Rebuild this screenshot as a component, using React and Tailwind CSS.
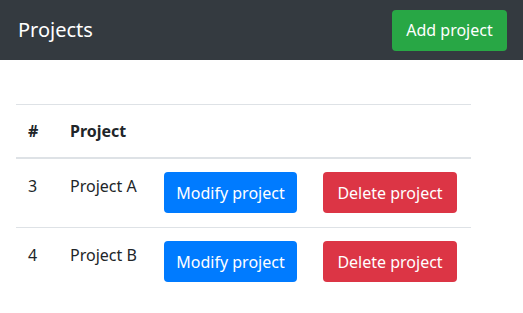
export default function App() {
  const rows = [
    { id: 3, name: "Project A" },
    { id: 4, name: "Project B" },
  ];
  return (
    <div className="min-h-[313px] bg-white text-[#212529]" style={{ fontFamily: '"Noto Sans", "Open Sans", sans-serif' }}>
      <div className="flex h-[60px] items-center justify-between bg-[#343a40] pl-[18px] pr-[16px]">
        <span className="text-[20px] leading-[30px] text-white">Projects</span>
        <button className="h-[41px] w-[115px] rounded-[4px] bg-[#28a745] text-[16px] text-white">Add project</button>
      </div>
      <div className="pl-[16px] pt-[44px]">
        <table className="w-[455px] border-collapse text-[16px] leading-[24px]">
          <thead>
            <tr className="border-t border-b-2 border-[#dee2e6]">
              <th className="w-[42px] py-[14px] pl-[12px] text-left font-bold">#</th>
              <th className="w-[94px] py-[14px] pl-[12px] text-left font-bold">Project</th>
              <th className="w-[159px]"></th>
              <th></th>
            </tr>
          </thead>
          <tbody>
            {rows.map((r, i) => (
              <tr key={r.id} className={i > 0 ? "border-t border-[#dee2e6] align-top" : "align-top"}>
                <td className="pl-[12px] pt-[15px]">{r.id}</td>
                <td className="pl-[12px] pt-[15px]">{r.name}</td>
                <td className="pl-[12px] pt-[13px] pb-[14px]">
                  <button className="h-[41px] w-[133px] rounded-[4px] bg-[#007bff] text-white">Modify project</button>
                </td>
                <td className="pl-[12px] pt-[13px] pb-[14px]">
                  <button className="h-[41px] w-[134px] rounded-[4px] bg-[#dc3545] text-white">Delete project</button>
                </td>
              </tr>
            ))}
          </tbody>
        </table>
      </div>
    </div>
  );
}
